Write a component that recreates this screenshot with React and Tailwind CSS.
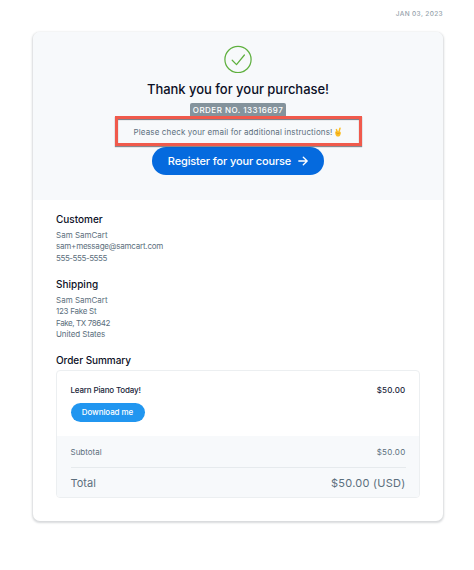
import React from "react";

const customer = [
  { text: "Sam SamCart", className: "" },
  { text: "sam+message@samcart.com", className: "tracking-[-0.22px]" },
  { text: "555-555-5555", className: "tracking-[-0.42px]" },
];
const shipping = [
  { text: "Sam SamCart", className: "" },
  { text: "123 Fake St", className: "tracking-[-0.27px]" },
  { text: "Fake, TX 78642", className: "tracking-[-0.4px]" },
  { text: "United States", className: "tracking-[-0.12px]" },
];

const CheckIcon = () => (
  <svg width="28" height="28" viewBox="0 0 28 28" fill="none" stroke="#5fb03f" strokeWidth="1.25">
    <circle cx="14" cy="14.5" r="13.1" />
    <path d="M8.2 15.2l4.3 4.4L20.4 10" strokeLinecap="round" strokeLinejoin="round" />
  </svg>
);

const ArrowIcon = () => (
  <svg width="10" height="10" viewBox="0 0 10 10" fill="none" stroke="white" strokeWidth="1.3" strokeLinecap="round" strokeLinejoin="round">
    <path d="M0.8 5h8.2M5.3 1.2L9.2 5L5.3 8.8" />
  </svg>
);

const HandIcon = () => (
  <svg width="8" height="10" viewBox="0 0 8 10" fill="none" strokeLinecap="round">
    <path d="M2.4 2.6L3.4 5.3M6 1.2L4.9 5.1" stroke="#fbbd22" strokeWidth="1.5" />
    <path d="M1.2 5.4c0-1.2 1.2-1.4 2-.9l2.6-.1c.9.2 1.1 1 1 2L6.3 8c-.4 1.2-1.2 1.6-2.2 1.6C2.3 9.6 1.2 8 1.2 5.4z" fill="#fbbd22" />
    <path d="M2.2 5.6l1.6 1.1 1.6-.6" stroke="#dc8b15" strokeWidth="0.6" />
  </svg>
);

const Section = ({ title, lines }) => (
  <div>
    <h2 className="h-[14px] text-[10px] leading-[14px] font-medium text-[#0b1026]">{title}</h2>
    <div className="mt-1 text-[8px] leading-[11.35px] text-[#5c6f7d]">
      {lines.map((line) => (
        <div key={line.text} className={line.className}>
          {line.text}
        </div>
      ))}
    </div>
  </div>
);

const App = () => {
  return (
    <div className="h-[570px] w-[474px] overflow-hidden bg-white pl-[33px] font-['Inter','Liberation_Sans',sans-serif]">
      {/* Date */}
      <div className="flex h-8 w-[410px] items-start justify-end pt-[9px] text-[6.5px] leading-[10px] font-medium tracking-[0.36px] text-[#94a1aa]">
        JAN 03, 2023
      </div>

      <div className="h-[489px] w-[410px] overflow-hidden rounded-[7px] bg-white shadow-[0_1px_2px_0.5px_rgba(40,50,60,0.18)]">
        {/* Confirmation */}
        <div className="flex h-[168px] flex-col items-center bg-[#f7f9fb] pt-[13px]">
          <CheckIcon />
          <h1 className="mt-[7px] text-[13px] leading-[18px] font-medium tracking-[-0.03px] whitespace-nowrap text-[#0b1026]">
            Thank you for your purchase!
          </h1>
          <div className="mt-[5px] h-[13px] w-24 rounded-t-[2px] bg-[#84939c] text-center text-[8px] leading-[14px] font-medium tracking-[0.48px] whitespace-nowrap text-white">
            ORDER NO. 13316697
          </div>
          <div className="relative z-10 mb-px flex h-[30px] w-[247px] items-center justify-center gap-[2px] border-[3px] border-[#f05a4c] pt-px text-[8px] whitespace-nowrap text-[#5c6f7d] shadow-[0_1px_1px_rgba(60,60,70,0.6),inset_0_1px_1px_rgba(60,60,70,0.7)]">
            <span className="tracking-[0.13px]">Please check your email for additional instructions!</span>
            <HandIcon />
          </div>
          <button className="flex h-7 w-[172px] items-center justify-center gap-[7px] rounded-full bg-[#056ade] text-[11px] font-medium whitespace-nowrap text-white">
            <span className="tracking-[-0.14px]">Register for your course</span>
            <ArrowIcon />
          </button>
        </div>

        <div className="px-[23px] pt-3">
          <Section title="Customer" lines={customer} />
          <div className="mt-[13px]">
            <Section title="Shipping" lines={shipping} />
          </div>

          {/* Order summary */}
          <h2 className="mt-[13px] text-[10px] leading-[14px] font-medium tracking-[-0.05px] text-[#0b1026]">Order Summary</h2>
          <div className="mt-[3px] h-[128px] w-[364px] overflow-hidden rounded-[4px] border border-[#eceff1]">
            <div className="flex h-[65px] justify-between px-[13.5px] pt-[13px] text-[8px] leading-[12px] font-medium text-[#20253a]">
              <div>
                <div className="tracking-[-0.17px]">Learn Piano Today!</div>
                <button className="mt-[7px] h-[19px] w-[74px] rounded-full bg-[#2196f0] text-[8px] leading-[19px] font-medium tracking-[-0.08px] text-white">
                  Download me
                </button>
              </div>
              <span className="tracking-[0.2px]">$50.00</span>
            </div>
            <div className="h-[63px] bg-[#f7f9fb] px-[13.5px] text-[#5c6f7d]">
              <div className="flex h-[32px] items-center justify-between border-b border-[#e6eaed] text-[8px]">
                <span>Subtotal</span>
                <span className="tracking-[0.3px]">$50.00</span>
              </div>
              <div className="flex h-[29px] items-center justify-between text-[11px]">
                <span>Total</span>
                <span className="tracking-[0.25px]">$50.00 (USD)</span>
              </div>
            </div>
          </div>
        </div>
      </div>
    </div>
  );
};

export default App;
